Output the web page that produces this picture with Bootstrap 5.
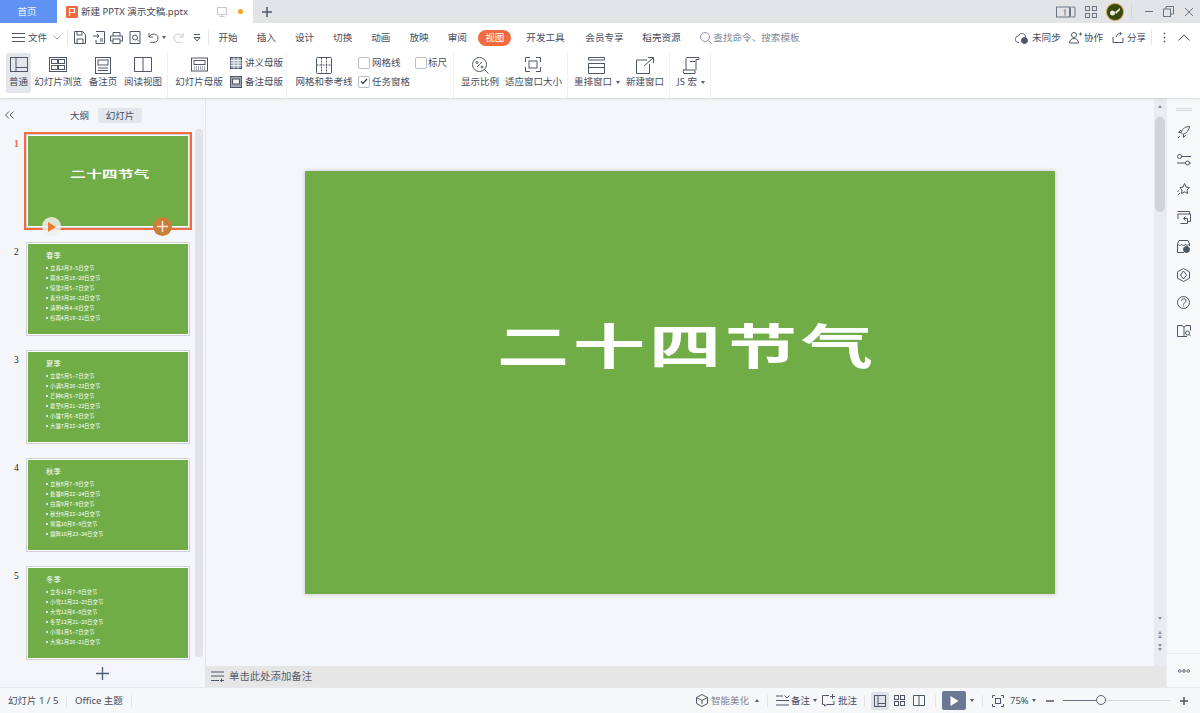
<!DOCTYPE html>
<html lang="zh-CN">
<head>
<meta charset="utf-8">
<title>新建 PPTX 演示文稿.pptx</title>
<link href="https://cdn.jsdelivr.net/npm/bootstrap@5.3.0/dist/css/bootstrap.min.css" rel="stylesheet">
<style>
html,body{height:100%;overflow:hidden}
body{font-family:"Noto Sans","Noto Sans CJK SC",sans-serif;font-size:9.5px;color:#454c5c;background:#f5f6f9;line-height:1.2}
svg{display:block;flex:none;fill:none;stroke:#4e5669;stroke-width:1}
.app{width:1200px;height:713px}
.tabbar{height:23px;background:#e3e4e8;flex:none}
.hometab{width:57px;background:#5f92f2;color:#eaf1ff;font-size:9.5px;padding-right:3px}
.doctab{width:196px;background:#fff;padding-left:9px;color:#3f4655;font-size:9.5px}
.filep{width:12px;height:12px;background:#ef6a3e;border-radius:1px}
.wdot{width:5px;height:5px;background:#eda71c;border-radius:50%}
.menurow{height:29px;background:#fff;flex:none;font-size:9.6px;white-space:nowrap}
.menutab{width:38.2px;text-align:center}
.pill{width:33px;height:16px;background:#f26b41;color:#fff;border-radius:8px;text-align:center;line-height:16px;margin:0 15px 0 2px}
.vsep{width:1px;height:15px;background:#e4e6ea;flex:none}
.ribbon{height:46px;background:#fff;flex:none;box-shadow:0 1px 2px rgba(60,70,90,.18);position:relative;z-index:2}
.rgroup{height:46px;border-right:1px solid #f0f1f3;flex:none;position:relative}
.ritem{height:40px;padding-top:4px;text-align:center;white-space:nowrap;border-radius:2px;flex:none}
.ritem svg{margin:0 auto 4px}
.ritem svg.tall{margin-bottom:2px}
.ritem.on{background:#e3e6ea}
.rsmall{height:19px;white-space:nowrap}
.chk{width:12px;height:12px;border:1px solid #b9bdc6;border-radius:2px;background:#fff;flex:none}
.caret{width:0;height:0;border-left:2.5px solid transparent;border-right:2.5px solid transparent;border-top:3px solid #555c6c;flex:none;display:inline-block}
.caret.up{border-top:0;border-bottom:3px solid #555c6c}
.mainrow{min-height:0}
.leftpane{width:206px;border-right:1px solid #e4e6ea;flex:none}
.pvtabs{height:31px;flex:none;padding:3px 0 0 70px}
.pvtab{height:15px;line-height:15px;text-align:center}
.pvtab.on{background:#e2e5ea;border-radius:2px;width:44px}
.slidelist{min-height:0;padding-top:5px}
.srow{height:108px;flex:none}
.snum{width:26px;padding:5px 0 0 14px;font:9.5px "Liberation Serif",serif;color:#222}
.snum.cur{color:#e8672f;font-weight:700}
.thumb{width:164px;height:94px;border:1px solid #cfd2d6;padding:1px;background:#fff;flex:none;position:relative}
.thumb.cur{outline:2px solid #f26b41;outline-offset:0}
.thumbfill{width:100%;height:100%;background:#70ad47;color:#fff;overflow:hidden}
.t1title{font:700 15.5px/1 "Noto Sans CJK SC",sans-serif;letter-spacing:.4px;transform:scaleY(.68);padding:36px 0 0 4px;text-align:center;white-space:nowrap}
.tbody{padding:7px 0 0 18px}
.thead{font:7.4px/1.2 "Noto Sans CJK SC",sans-serif;margin-bottom:3px}
.tline{font:5.4px/10px "Noto Sans CJK SC",sans-serif;height:10.05px;white-space:nowrap}
.tline::before{content:"";display:inline-block;width:2px;height:2px;background:#fff;border-radius:50%;margin:0 2px 1px 0;vertical-align:middle}
.cplay,.cplus{position:absolute;width:19px;height:19px;border-radius:50%;top:82px}
.cplay{left:15px;background:rgba(240,240,238,.85)}
.cplus{left:126px;background:#c8803c}
.panebar{width:8px;margin:0 2px 0 5px;background:#e0e3e7;border-radius:4px;height:528px;margin-top:-5px;flex:none}
.addrow{height:27px;flex:none;padding-left:0}
.canvas{min-width:0;min-height:0}
.slide{width:750px;height:423px;background:#70ad47;box-shadow:0 0 4px rgba(70,80,90,.3);color:#fff}
.bigtitle{font:700 72px/1 "Noto Sans CJK SC",sans-serif;letter-spacing:4px;transform:scaleY(.66);white-space:nowrap;margin:-76px 0 0 14px}
.vbar{width:12px;background:#e9ebf0;flex:none;position:relative}
.vthumb{position:absolute;left:1px;top:19px;width:10px;height:95px;background:#cfd3da;border-radius:5px}
.tri{position:absolute;left:4px;width:0;height:0;border-left:2px solid transparent;border-right:2px solid transparent}
.tri.u{border-bottom:3px solid #8a91a0}
.tri.d{border-top:3px solid #8a91a0}
.notesbar{height:21px;background:#e6e6e6;flex:none;padding-left:5px;font-size:10.4px;color:#565c68}
.rail{width:34px;flex:none;padding-top:10px;border-left:1px solid #eceef1;background:#f7f8fa}
.railbtn{height:28.4px;flex:none}
.grip{width:16px;height:3px;border-top:1px solid #d4d7dc;border-bottom:1px solid #d4d7dc;margin-bottom:15px}
.raildots{height:34px;border-top:1px solid #e8eaed;flex:none}
.statusbar{height:26px;flex:none;border-top:1px solid #e6e8ec;background:#f6f7f9;font-size:9.5px;padding-left:8px}
.ssep{width:1px;height:12px;background:#e2e4e8;flex:none}
.viewon{width:18px;height:18px;background:#dfe2e8;border-radius:2px}
.playbtn{width:24px;height:19px;background:#6b7893;border-radius:2px}
.slider{width:108px;height:1px;background:#d6d9e0;position:relative;flex:none}
.sliderfill{position:absolute;left:0;top:0;height:1px;width:38px;background:#6a7183}
.knob{position:absolute;left:33px;top:-5px;width:10px;height:10px;border-radius:50%;border:1px solid #5c6374;background:#f6f7f9}
.sp1{width:1px}.sp2{width:2px}.sp3{width:3px}.sp4{width:4px}.sp5{width:5px}.sp6{width:6px}.sp7{width:7px}.sp8{width:8px}.sp9{width:9px}.sp10{width:10px}.sp12{width:12px}.sp13{width:13px}.sp14{width:14px}
[class^="sp"]{flex:none}
.gray{color:#7f8595}
</style>
</head>
<body>
<div class="app d-flex flex-column">

<!-- tab bar -->
<div class="tabbar d-flex align-items-stretch">
  <div class="hometab d-flex align-items-center justify-content-center">首页</div>
  <div class="doctab d-flex align-items-center">
    <div class="filep"><svg width="12" height="12" viewBox="0 0 12 12" style="stroke:#fff;stroke-width:1.2"><path d="M3.5 10V2.500h5v4h-5"/></svg></div><span class="sp3"></span><span>新建 PPTX 演示文稿.pptx</span>
    <span class="flex-grow-1"></span>
    <svg width="12" height="12" viewBox="0 0 12 12" style="stroke:#c4c8cf"><rect x="1.5" y="1.5" width="9" height="7"/><path d="M6 8.500v2M3.500 10.500h5"/></svg>
    <span class="sp10"></span><div class="wdot"></div><span class="sp10"></span>
  </div>
  <div class="d-flex align-items-center ps-2">
    <svg width="12" height="12" viewBox="0 0 12 12" style="stroke:#4e5669;stroke-width:1.5"><path d="M6 1v10M1 6h10"/></svg>
  </div>
  <div class="flex-grow-1"></div>
  <div class="d-flex align-items-center">
    <svg width="20" height="12" viewBox="0 0 20 12" style="stroke:#6d7484"><rect x=".5" y="1" width="13" height="10"/><rect x="14.500" y="1" width="4.500" height="10" rx=".8"/><path d="M9 3.500v6M8 4.500l1-1"/></svg>
    <span class="sp9"></span>
    <svg width="12" height="12" viewBox="0 0 12 12" style="stroke:#6d7484"><rect x=".5" y=".5" width="4" height="4"/><rect x="7.500" y=".5" width="4" height="4"/><rect x=".5" y="7.500" width="4" height="4"/><rect x="7.500" y="7.500" width="4" height="4"/></svg>
    <span class="sp9"></span>
    <svg width="18" height="18" viewBox="0 0 18 18" style="stroke:none"><circle cx="9" cy="9" r="9" fill="#c9a24a"/><circle cx="9" cy="9" r="8" fill="#39480f"/><circle cx="6.500" cy="10" r="2.500" fill="#e6ecd8"/><path d="M9 9l5-4v2l-4 4z" fill="#e6ecd8"/></svg>
    <span class="sp7"></span><span class="ssep" style="height:15px;background:#d4d6db"></span><span class="sp13"></span>
    <svg width="9" height="9" viewBox="0 0 9 9" style="stroke:#6d7484"><path d="M0 4.500h8"/></svg>
    <span class="sp9"></span>
    <svg width="11" height="11" viewBox="0 0 11 11" style="stroke:#6d7484"><rect x=".5" y="3" width="7" height="7.500"/><path d="M3 3V.5h7.500v7.500H7.500"/></svg>
    <span class="sp10"></span>
    <svg width="10" height="10" viewBox="0 0 10 10" style="stroke:#6d7484"><path d="M1 1l8 8M9 1l-8 8"/></svg>
    <span class="sp6"></span>
  </div>
</div>

<!-- menu row -->
<div class="menurow d-flex align-items-center">
  <span class="sp12"></span>
  <svg width="13" height="9" viewBox="0 0 13 9"><path d="M0 .5h13M0 4.500h13M0 8.500h13"/></svg>
  <span class="sp3"></span><span style="width:19px">文件</span><span class="sp6"></span>
  <svg width="8" height="5" viewBox="0 0 8 5" style="stroke:#a0a5b0"><path d="M.5.500L4 4 7.500.5"/></svg>
  <span class="sp6"></span><span class="vsep"></span><span class="sp6"></span>
  <svg width="12" height="13" viewBox="0 0 12 13"><path d="M.5.500h8l3 3v9H.5z"/><path d="M3 .5v3.500h5V.5M3 12.500V8h6v4.500"/></svg>
  <span class="sp7"></span>
  <svg width="12" height="13" viewBox="0 0 12 13"><path d="M3 .5h8.500v12H3V9"/><path d="M0 5h6M4 3l2 2-2 2"/><path d="M7 8h3M7 10h3"/></svg>
  <span class="sp5"></span>
  <svg width="13" height="12" viewBox="0 0 13 12"><path d="M3 4V.5h7V4M3 9H.5V4h12v5H10"/><rect x="3" y="7" width="7" height="4.500"/></svg>
  <span class="sp6"></span>
  <svg width="12" height="13" viewBox="0 0 12 13"><path d="M1 .5h10v12H1z"/><circle cx="6" cy="6.500" r="2.500"/><path d="M8 8.500l2 2"/></svg>
  <span class="sp7"></span>
  <svg width="11" height="11" viewBox="0 0 11 11"><path d="M1 5c2-4 9-4 9 1s-5 5-8 4"/><path d="M1 1v4h4"/></svg>
  <span class="sp3"></span><span class="caret"></span><span class="sp7"></span>
  <svg width="11" height="11" viewBox="0 0 11 11" style="stroke:#c3c6cd"><path d="M10 5C8 1 1 1 1 6s5 5 8 4"/><path d="M10 1v4H6"/></svg>
  <span class="sp9"></span>
  <svg width="8" height="8" viewBox="0 0 8 8"><path d="M1 .5h6M1 3.500L4 7l3-3.500z"/></svg>
  <span class="sp7"></span><span class="vsep"></span>
  <div class="d-flex align-items-center">
    <div class="menutab">开始</div><div class="menutab">插入</div><div class="menutab">设计</div><div class="menutab">切换</div><div class="menutab">动画</div><div class="menutab">放映</div><div class="menutab">审阅</div>
  </div>
  <div class="pill">视图</div>
  <span style="width:38px">开发工具</span><span style="width:21px"></span>
  <span style="width:38px">会员专享</span><span style="width:19px"></span>
  <span style="width:38px">稻壳资源</span><span style="width:20px"></span>
  <svg width="12" height="12" viewBox="0 0 12 12" style="stroke:#8f96a5"><circle cx="5" cy="5" r="4.500"/><path d="M8.500 8.500l3 3"/></svg>
  <span class="sp1"></span><span class="gray">查找命令、搜索模板</span>
  <span class="flex-grow-1"></span>
  <svg width="14" height="12" viewBox="0 0 14 12"><path d="M4 10.500C-1 10.500-.5 4 3.500 4 5 0 10.500 1 10.500 5"/><circle cx="9.500" cy="8.500" r="3" fill="#4e5669"/></svg>
  <span class="sp3"></span><span style="width:28px">未同步</span><span class="sp9"></span>
  <svg width="13" height="12" viewBox="0 0 13 12"><circle cx="5" cy="3" r="2.500"/><path d="M.5 11c0-6 9-6 9 0zM10 2h3M11.500.5v3"/></svg>
  <span class="sp2"></span><span style="width:19px">协作</span><span class="sp9"></span>
  <svg width="12" height="11" viewBox="0 0 12 11"><path d="M1 5v5.500h10V6M4 5c1-3 3-3.500 5-3.500M7.500 0l2 1.500-2 2"/></svg>
  <span class="sp3"></span><span style="width:19px">分享</span><span class="sp5"></span>
  <span class="vsep"></span><span style="width:11px"></span>
  <svg width="3" height="11" viewBox="0 0 3 11" style="stroke:none"><g fill="#5b6272"><circle cx="1.500" cy="1.500" r=".9"/><circle cx="1.500" cy="5.500" r=".9"/><circle cx="1.500" cy="9.500" r=".9"/></g></svg>
  <span class="sp12"></span>
  <svg width="12" height="7" viewBox="0 0 12 7"><path d="M.5 6.500L6 1l5.500 5.500"/></svg>
  <span class="sp10"></span>
</div>

<!-- ribbon -->
<div class="ribbon d-flex">
  <div class="rgroup d-flex" style="width:168px;padding:1px 0 0 6px">
    <div class="ritem on" style="width:25px">
      <svg width="18" height="15" viewBox="0 0 18 15"><rect x=".5" y=".5" width="17" height="14"/><path d="M6 .5v14M6 10.500h11.500"/></svg>普通</div>
    <span class="sp2"></span>
    <div class="ritem" style="width:50px">
      <svg width="18" height="15" viewBox="0 0 18 15"><rect x=".5" y=".5" width="17" height="14"/><rect x="2.500" y="2.500" width="6" height="4"/><rect x="9.500" y="2.500" width="6" height="4"/><rect x="2.500" y="8.500" width="6" height="4"/><rect x="9.500" y="8.500" width="6" height="4"/></svg>幻灯片浏览</div>
    <div class="ritem" style="width:40px">
      <svg class="tall" width="16" height="17" viewBox="0 0 16 17"><rect x=".5" y=".5" width="15" height="16"/><rect x="3" y="3" width="10" height="5"/><path d="M3 11h10M3 13.500h10"/></svg>备注页</div>
    <div class="ritem" style="width:40px">
      <svg width="18" height="15" viewBox="0 0 18 15"><path d="M.5.500H9v14H.5zM9 .5h8.500v14H9"/></svg>阅读视图</div>
  </div>
  <div class="rgroup d-flex" style="width:119px;padding:1px 0 0 6px">
    <div class="ritem" style="width:50px">
      <svg width="17" height="15" viewBox="0 0 17 14"><rect x=".5" y=".5" width="16" height="13"/><rect x="3" y="3" width="11" height="4"/><path d="M3 9.500h11M3 11.500h11" stroke-dasharray="1 1"/></svg>幻灯片母版</div>
    <span class="sp6"></span>
    <div class="d-flex flex-column">
      <div class="rsmall d-flex align-items-center">
        <svg width="12" height="12" viewBox="0 0 12 12"><rect x=".5" y=".5" width="11" height="11" fill="#a4a9b4"/><path d="M4 .5v11M8 .5v11M.5 3.500h11M.5 6h11M.5 8.500h11" stroke="#eef0f3"/></svg><span class="sp3"></span>讲义母版</div>
      <div class="rsmall d-flex align-items-center">
        <svg width="12" height="12" viewBox="0 0 12 12"><rect x=".5" y=".5" width="11" height="11" fill="#a4a9b4"/><rect x="2.500" y="3" width="7" height="5" fill="#eef0f3" stroke="#555"/></svg><span class="sp3"></span>备注母版</div>
    </div>
  </div>
  <div class="rgroup d-flex" style="width:167px;padding:1px 0 0 8px">
    <div class="ritem" style="width:58px">
      <svg class="tall" width="16" height="17" viewBox="0 0 16 17"><rect x=".5" y=".5" width="15" height="16" rx="1"/><path d="M5.500.5v16M10.500.5v16M.5 8h15" stroke-dasharray="2 1"/></svg>网格和参考线</div>
    <span class="sp5"></span>
    <div class="d-flex flex-column" style="width:90px">
      <div class="d-flex rsmall align-items-center"><span class="chk"></span><span class="sp2"></span><span style="width:43px">网格线</span><span class="chk"></span><span class="sp1"></span>标尺</div>
      <div class="d-flex rsmall align-items-center"><span class="chk d-flex align-items-center justify-content-center"><svg width="8" height="7" viewBox="0 0 8 7" style="stroke:#333;stroke-width:1.2"><path d="M1 3.500L3 5.500 7 1"/></svg></span><span class="sp2"></span>任务窗格</div>
    </div>
  </div>
  <div class="rgroup d-flex" style="width:114px;padding:1px 0 0 6px">
    <div class="ritem" style="width:40px">
      <svg class="tall" width="17" height="17" viewBox="0 0 17 17"><circle cx="7.500" cy="7.500" r="7"/><path d="M12.500 12.500l4 4M10 5l-5 5"/><circle cx="5" cy="5.500" r="1"/><circle cx="10" cy="10" r="1"/></svg>显示比例</div>
    <span class="sp5"></span>
    <div class="ritem" style="width:56px">
      <svg width="16" height="15" viewBox="0 0 16 15"><path d="M5 .5H.5V5M11 .5h4.500V5M5 14.500H.5V10M11 14.500h4.500V10"/><rect x="4" y="4" width="8" height="7"/></svg>适应窗口大小</div>
  </div>
  <div class="rgroup d-flex" style="width:102px;padding:1px 0 0 6px">
    <div class="ritem" style="width:45px">
      <svg class="tall" width="17" height="17" viewBox="0 0 17 17"><path d="M.5 3V.5h16V3M.5 3h16"/><rect x=".5" y="6.500" width="16" height="4"/><path d="M.5 10.500v6h16v-6"/></svg>重排窗口<span class="caret ms-1 align-middle"></span></div>
    <span class="sp7"></span>
    <div class="ritem" style="width:38px">
      <svg class="tall" width="18" height="17" viewBox="0 0 18 17"><path d="M11 3H.5v13.500h13V7M8 9l9-8M12 .5h5.500V6"/></svg>新建窗口</div>
  </div>
  <div class="rgroup d-flex" style="width:41px;padding:1px 0 0 6px">
    <div class="ritem" style="width:30px">
      <svg class="tall" width="18" height="17" viewBox="0 0 18 17"><path d="M4 13V1.500C4 .5 5 .5 5 .5h12v2h-3V13M1 13h12v3.500H2c-1 0-1-3.500 0-3.500zM8 4.500h5"/></svg><span>JS 宏<span class="caret ms-1 align-middle"></span></span></div>
  </div>
</div>

<!-- main -->
<div class="mainrow flex-grow-1 d-flex">
  <div class="leftpane d-flex flex-column">
    <div class="pvtabs d-flex align-items-center position-relative">
      <svg class="position-absolute" style="left:5px;top:13px" width="9" height="8" viewBox="0 0 9 8"><path d="M4 .5L.5 4 4 7.500M8.500.5L5 4l3.500 3.500"/></svg>
      <span class="pvtab" style="width:19px">大纲</span>
      <span class="sp9"></span>
      <span class="pvtab on">幻灯片</span>
    </div>
    <div class="d-flex flex-grow-1 slidelist">
      <div style="width:190px;flex:none">
        <div class="srow d-flex">
          <div class="snum cur">1</div>
          <div class="thumb cur">
            <div class="thumbfill"><div class="t1title">二十四节气</div></div>
            <div class="cplay d-flex align-items-center justify-content-center"><svg width="9" height="10" viewBox="0 0 9 10" style="stroke:none"><path d="M1 0l8 5-8 5z" fill="#ef7b2e"/></svg></div>
            <div class="cplus d-flex align-items-center justify-content-center"><svg width="11" height="11" viewBox="0 0 11 11" style="stroke:#fbe9d8;stroke-width:1.5"><path d="M5.500 0v11M0 5.500h11"/></svg></div>
          </div>
        </div>
        <div class="srow d-flex">
          <div class="snum">2</div>
          <div class="thumb"><div class="thumbfill tbody">
            <div class="thead">春季</div>
            <div class="tline">立春2月3~5日交节</div><div class="tline">雨水2月18~20日交节</div><div class="tline">惊蛰3月5~7日交节</div><div class="tline">春分3月20~22日交节</div><div class="tline">清明4月4~6日交节</div><div class="tline">谷雨4月19~21日交节</div>
          </div></div>
        </div>
        <div class="srow d-flex">
          <div class="snum">3</div>
          <div class="thumb"><div class="thumbfill tbody">
            <div class="thead">夏季</div>
            <div class="tline">立夏5月5~7日交节</div><div class="tline">小满5月20~22日交节</div><div class="tline">芒种6月5~7日交节</div><div class="tline">夏至6月21~22日交节</div><div class="tline">小暑7月6~8日交节</div><div class="tline">大暑7月22~24日交节</div>
          </div></div>
        </div>
        <div class="srow d-flex">
          <div class="snum">4</div>
          <div class="thumb"><div class="thumbfill tbody">
            <div class="thead">秋季</div>
            <div class="tline">立秋8月7~9日交节</div><div class="tline">处暑8月22~24日交节</div><div class="tline">白露9月7~9日交节</div><div class="tline">秋分9月22~24日交节</div><div class="tline">寒露10月8~9日交节</div><div class="tline">霜降10月23~24日交节</div>
          </div></div>
        </div>
        <div class="srow d-flex">
          <div class="snum">5</div>
          <div class="thumb"><div class="thumbfill tbody">
            <div class="thead">冬季</div>
            <div class="tline">立冬11月7~8日交节</div><div class="tline">小雪11月22~23日交节</div><div class="tline">大雪12月6~8日交节</div><div class="tline">冬至12月21~23日交节</div><div class="tline">小寒1月5~7日交节</div><div class="tline">大寒1月20~21日交节</div>
          </div></div>
        </div>
      </div>
      <div class="panebar"></div>
    </div>
    <div class="addrow d-flex align-items-center justify-content-center">
      <svg width="13" height="13" viewBox="0 0 13 13" style="stroke:#4c5a78;stroke-width:1.3"><path d="M6.500 0v13M0 6.500h13"/></svg>
    </div>
  </div>

  <div class="flex-grow-1 d-flex flex-column" style="min-width:0">
    <div class="flex-grow-1 d-flex" style="min-height:0">
      <div class="canvas flex-grow-1 d-flex align-items-center justify-content-center">
        <div class="slide d-flex align-items-center justify-content-center"><div class="bigtitle">二十四节气</div></div>
      </div>
      <div class="vbar">
        <span class="tri u" style="top:7px"></span>
        <div class="vthumb"></div>
        <span class="tri d" style="bottom:46px"></span>
        <span class="tri u" style="bottom:32px"></span><span class="tri u" style="bottom:28px"></span>
        <span class="tri d" style="bottom:19px"></span><span class="tri d" style="bottom:15px"></span>
      </div>
    </div>
    <div class="notesbar d-flex align-items-center">
      <svg width="13" height="11" viewBox="0 0 13 11"><path d="M0 1h13M0 5h13M0 9.500h8M10.500 7.500v3.500M9 9.500h4"/></svg>
      <span class="sp5"></span>单击此处添加备注
    </div>
  </div>

  <div class="rail d-flex flex-column align-items-center">
    <div class="grip"></div>
    <div class="flex-grow-1 d-flex flex-column align-items-center">
      <div class="railbtn"><svg width="13" height="13" viewBox="0 0 13 13"><path d="M12.500.5c-4 0-7 2-8.500 6l2 2c4-1.500 6-4.500 6.500-8zM4 6.500H1.500L4 4M6.500 9v2.500L9 9M1 12l2-2"/></svg></div>
      <div class="railbtn"><svg width="14" height="12" viewBox="0 0 14 12"><circle cx="2.500" cy="2.500" r="2"/><circle cx="10.500" cy="9" r="2"/><path d="M4.500 2.500H14M0 9h8.500M12.500 9H14"/></svg></div>
      <div class="railbtn"><svg width="13" height="13" viewBox="0 0 13 13"><path d="M7.500.5l1.500 3.500 3.500.5-2.500 2.500.5 3.500-3-1.700-3 1.700.5-3.500L3 4.500l3-.5zM1 12l2-2M.5 8.500l1.500-1"/></svg></div>
      <div class="railbtn"><svg width="14" height="13" viewBox="0 0 14 13"><path d="M10.500 10.500H13.500V3H1v5"/><path d="M.5 .5h12v2.500"/><path d="M3.500 12.500h7v-5H7M8.500 5.500L6.500 7.500l2 2"/></svg></div>
      <div class="railbtn"><svg width="13" height="13" viewBox="0 0 13 13"><path d="M7 12.500H.5V4L2 .5h9L12.500 4v2"/><path d="M.5 4c2 2 3 2 4 0 1 2 3 2 4 0 1 2 2.500 1.500 4 0"/><circle cx="9.500" cy="9.500" r="3" fill="#4e5669"/></svg></div>
      <div class="railbtn"><svg width="13" height="14" viewBox="0 0 13 14"><path d="M6.500.5l6 3.300v6.400l-6 3.300-6-3.300V3.800z"/><path d="M6.500 3l3 4-3 4-3-4z"/></svg></div>
      <div class="railbtn"><svg width="13" height="13" viewBox="0 0 13 13"><circle cx="6.500" cy="6.500" r="6"/><path d="M4.500 5c0-3 4.500-3 4.500 0 0 1.500-2.500 1.500-2.500 3.500M6.500 9.500v1"/></svg></div>
      <div class="railbtn"><svg width="14" height="12" viewBox="0 0 14 12"><path d="M7 2v9.500H.5V.5H5zM7 2l2-1.500h4.500v5M7 11.500h3"/><circle cx="10.500" cy="8" r="2"/><path d="M12 9.500l1.500 1.500"/></svg></div>
    </div>
    <div class="raildots w-100 d-flex align-items-center justify-content-center">
      <svg width="12" height="4" viewBox="0 0 12 4" style="stroke:#5c6374"><circle cx="1.700" cy="2" r="1.300"/><circle cx="6" cy="2" r="1.300"/><circle cx="10.300" cy="2" r="1.300"/></svg>
    </div>
  </div>
</div>

<!-- status bar -->
<div class="statusbar d-flex align-items-center">
  <span style="width:50px;white-space:nowrap">幻灯片 1 / 5</span><span class="sp8"></span><span class="ssep"></span><span class="sp8"></span>
  <span style="width:48px;white-space:nowrap">Office 主题</span><span class="sp8"></span><span class="ssep"></span>
  <span class="flex-grow-1"></span>
  <svg width="12" height="13" viewBox="0 0 12 13"><path d="M6 .5l5.500 3v6L6 12.500.5 9.500v-6zM.5 3.500L6 6.500l5.500-3M6 6.500V10"/></svg>
  <span class="sp3"></span><span class="gray" style="width:38px;white-space:nowrap">智能美化</span><span class="sp6"></span><span class="caret up"></span>
  <span class="sp8"></span><span class="ssep"></span><span class="sp8"></span>
  <svg width="14" height="11" viewBox="0 0 14 11"><path d="M0 1h7M0 5.500h13M0 10h13M8.500.5L11 3l2.500-2.500"/></svg>
  <span class="sp1"></span><span style="width:18px;white-space:nowrap">备注</span><span class="sp4"></span><span class="caret"></span><span class="sp5"></span>
  <svg width="13" height="13" viewBox="0 0 13 13"><path d="M7 1.500H.5v9h2V12l2.500-1.500h7V7M10.500 0v5M8 2.500h5"/></svg>
  <span class="sp3"></span><span style="width:18px;white-space:nowrap">批注</span><span class="sp8"></span><span class="ssep"></span>
  <span class="sp6"></span>
  <div class="viewon d-flex align-items-center justify-content-center"><svg width="12" height="12" viewBox="0 0 12 12"><rect x=".5" y=".5" width="11" height="11"/><path d="M4 .5v11M4 8.500h7.500"/></svg></div>
  <span class="sp5"></span>
  <svg width="11" height="11" viewBox="0 0 11 11"><rect x=".5" y=".5" width="4" height="4"/><rect x="6.500" y=".5" width="4" height="4"/><rect x=".5" y="6.500" width="4" height="4"/><rect x="6.500" y="6.500" width="4" height="4"/></svg>
  <span class="sp8"></span>
  <svg width="12" height="11" viewBox="0 0 12 11"><path d="M.5.500H6v10H.5zM6 .5h5.500v10H6"/></svg>
  <span class="sp10"></span><span class="ssep"></span><span class="sp6"></span>
  <div class="playbtn d-flex align-items-center justify-content-center"><svg width="9" height="10" viewBox="0 0 9 10" style="stroke:none"><path d="M.5 0L8.500 5 .5 10z" fill="#fff"/></svg></div>
  <span class="sp4"></span><span class="caret"></span><span class="sp8"></span><span class="ssep"></span><span class="sp9"></span>
  <svg width="12" height="12" viewBox="0 0 12 12"><path d="M3 .5H.5V3M9 .5h2.500V3M3 11.500H.5V9M9 11.500h2.500V9"/><rect x="3.500" y="3.500" width="5" height="5"/></svg>
  <span class="sp6"></span><span style="width:19px">75%</span><span class="sp3"></span><span class="caret"></span>
  <span class="sp10"></span>
  <svg width="8" height="2" viewBox="0 0 8 2" style="stroke:#4e5669;stroke-width:1.5"><path d="M0 1h8"/></svg>
  <span class="sp9"></span>
  <div class="slider"><div class="sliderfill"></div><div class="knob"></div></div>
  <span class="sp9"></span>
  <svg width="8" height="8" viewBox="0 0 8 8" style="stroke:#4e5669;stroke-width:1.5"><path d="M4 0v8M0 4h8"/></svg>
  <span class="sp12"></span>
</div>

</div>
<script src="https://cdn.jsdelivr.net/npm/bootstrap@5.3.0/dist/js/bootstrap.bundle.min.js"></script>
</body>
</html>
